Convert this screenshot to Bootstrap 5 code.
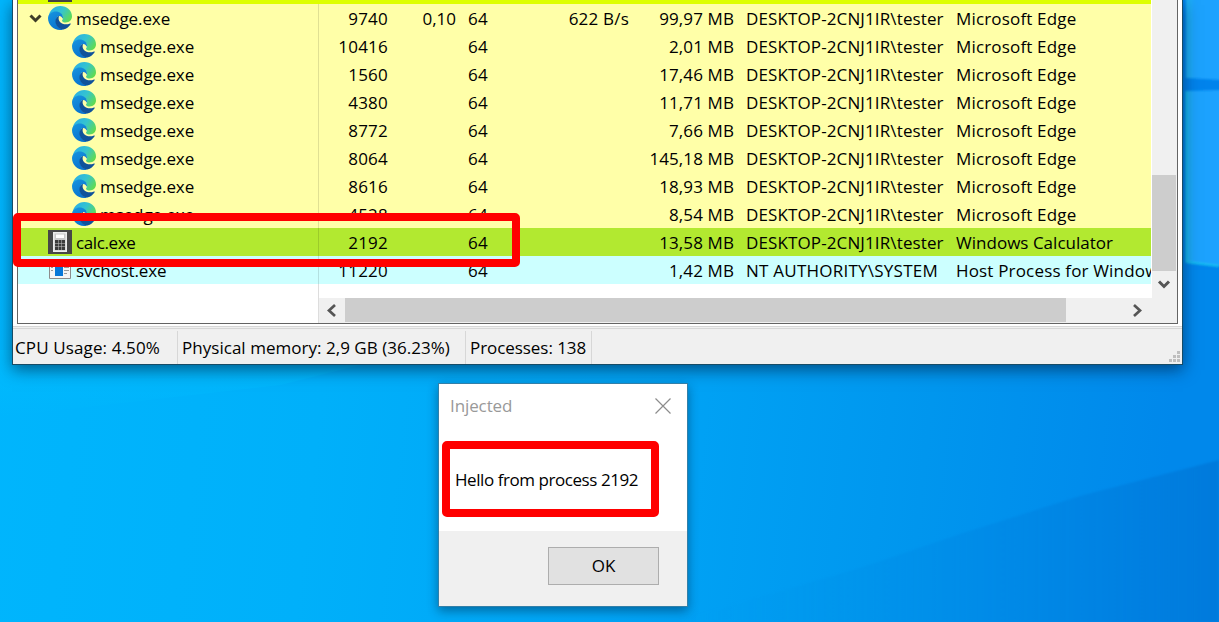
<!DOCTYPE html>
<html lang="en">
<head>
<meta charset="utf-8">
<meta name="viewport" content="width=device-width, initial-scale=1">
<title>Process list</title>
<link href="https://cdn.jsdelivr.net/npm/bootstrap@5.3.0/dist/css/bootstrap.min.css" rel="stylesheet">
<style>
body{width:1219px;height:622px;font:17px/28px "Open Sans","Noto Sans",sans-serif;color:#000;background:#00b4fb}
.wallpaper{left:0;top:0}
.proc-window{left:12px;top:0;width:1171px;height:365px;background:#fff;border:1px solid #174c66;border-top:0;box-shadow:0 5px 15px rgba(0,20,50,.55)}
.tree-pane{margin:0 4px;height:324px;border:1px solid #646464;border-top:0;background:#fff;width:1161px}
.rows-area{width:1133px;height:298px}
.lime-edge{height:4px;background:#df0}
.prow{height:28px;line-height:29px;white-space:nowrap;overflow:hidden}
.prow>div{flex:none;height:28px;white-space:pre}
.edge-row{background:#ffffa8}
.calc-row{background:#b2e930}
.svc-row{background:#cff}
.c-name{width:301px;border-right:1px solid rgba(0,0,0,.12)}
.c-name span{margin-left:4px;letter-spacing:-.09px}
.calc-row .c-name span{letter-spacing:-.4px}
.svc-row .c-name span{letter-spacing:-.15px}
.ps-root{padding-left:30px}
.ps-indent{padding-left:54px}
.c-name svg{flex:none}
.c-pid{width:69px;letter-spacing:.22px}
.c-cpu{width:68px}
.c-bits{width:60px;padding-left:12px;letter-spacing:.2px}
.c-io{width:113px;letter-spacing:.2px}
.c-mem{width:105px;letter-spacing:.1px}
.c-user{width:210px;padding-left:12px}
.u1{letter-spacing:.12px}
.u2{letter-spacing:.24px}
.c-desc{padding-left:12px;letter-spacing:.17px}
.calc-row .c-desc{letter-spacing:.02px}
.fill-row{height:14px}
.fill-row>div{width:301px;border-right:1px solid #ddd}
.vbar{width:26px;height:298px;background:#f0f0f0;border-left:1px solid #fff}
.vthumb{width:24px;height:96px;margin-top:175px;background:#cdcdcd}
.hline{height:25px}
.hblank{width:301px;border-right:1px solid #ddd}
.hbar{background:#f0f0f0;height:25px}
.hthumb{width:721px;height:24px;background:#cdcdcd}
.status-strip{height:38px;margin-top:2px;border-top:1px solid #d7d7d7;background:#f0f0f0}
.status-in{height:35px;margin-top:1px;border-top:1px solid #d7d7d7;white-space:nowrap}
.status-in>div{height:33px;margin-top:2px;line-height:34px;border-right:1px solid #d7d7d7;flex:none}
.s1{width:165px;padding-left:2px;letter-spacing:.12px}
.s2{width:288px;padding-left:4px;letter-spacing:.03px}
.s3{width:126px;padding-left:4px;letter-spacing:-.06px}
.grip{right:2px;bottom:2px}
.dialog{left:438px;top:383px;width:250px;height:224px;border:1px solid #327fa8;background:#fff;box-shadow:0 4px 10px rgba(0,30,60,.45)}
.dlg-title{height:46px;padding:0 16px 2px 11px;color:#999;line-height:48px;letter-spacing:-.1px}
.dlg-body{height:101px;padding:36px 0 0 16px;letter-spacing:-.44px}
.dlg-foot{height:75px;background:#f0f0f0;padding:16px 28px 0 0}
.ok-btn{width:111px;height:38px;border:1px solid #adadad;border-radius:0;background:#e1e1e1;font-size:17px;line-height:36px;padding:0;color:#000}
.mark-box{border:8px solid #f00;border-radius:5px}
.m1{left:13px;top:213px;width:507px;height:54px}
.m2{left:442px;top:441px;width:217px;height:76px}
</style>
</head>
<body class="position-relative overflow-hidden">
<svg class="wallpaper position-absolute" width="1219" height="622">
<defs>
<linearGradient id="sky" x1="0" y1="0" x2="1" y2="0.06"><stop offset="0" stop-color="#00b6fd"/><stop offset=".3" stop-color="#00b0fa"/><stop offset=".55" stop-color="#00a5f6"/><stop offset=".8" stop-color="#0096ee"/><stop offset="1" stop-color="#0088eb"/></linearGradient>
<linearGradient id="beam" x1="0" y1="0" x2="1" y2="0"><stop offset="0" stop-color="#0096e8" stop-opacity="0"/><stop offset=".5" stop-color="#0088e5" stop-opacity=".5"/><stop offset="1" stop-color="#007adc"/></linearGradient>
<linearGradient id="low" x1="0" y1="0" x2="0" y2="1"><stop offset="0" stop-color="#00bfff" stop-opacity=".6"/><stop offset="1" stop-color="#00bfff" stop-opacity="0"/></linearGradient>
<linearGradient id="pane" x1="0" y1="0" x2="1" y2="0"><stop offset="0" stop-color="#1bb4f4"/><stop offset=".25" stop-color="#1ba2fd"/><stop offset="1" stop-color="#20a3ff"/></linearGradient>
<filter id="soft"><feGaussianBlur stdDeviation="1"/></filter>
</defs>
<rect width="1219" height="622" fill="url(#sky)"/>
<path d="M0 350H420L280 385L0 417Z" fill="url(#low)"/>
<path d="M690 617L860 568L960 534L1080 496L1219 460V622H690Z" fill="url(#beam)" filter="url(#soft)"/>
<rect x="1180" width="39" height="270" fill="#0083ec"/>
<g filter="url(#soft)"><path d="M1186-4H1223V80L1186 78Z" fill="url(#pane)"/><path d="M1186 91L1223 90V266L1186 262Z" fill="url(#pane)"/><path d="M1186 262L1219 266M1186.500 91V262" stroke="#19c3f0" stroke-width="2" fill="none"/></g>
</svg>

<svg width="0" height="0" class="position-absolute">
<defs>
<linearGradient id="eg" x1="0" y1=".2" x2="1" y2=".7"><stop offset="0" stop-color="#28aee8"/><stop offset=".5" stop-color="#35c4cf"/><stop offset="1" stop-color="#62dc4c"/></linearGradient>
<linearGradient id="eb" x1="0" y1="0" x2=".5" y2="1"><stop offset="0" stop-color="#1795df"/><stop offset="1" stop-color="#0873cf"/></linearGradient>
<symbol id="edge" viewBox="0 0 24 24">
<path d="M.6 10.500C1.500 4.300 6.200 0 12.200 0C19 0 24 4.800 24 10.300C24 14.200 21.200 16.500 17.800 16.500C15.300 16.500 14 15.500 14 14.700C14 14 15 13.500 15 11.700C15 8.600 11.500 6.200 7.500 6.200C4.500 6.200 1.900 7.700.6 10.500Z" fill="url(#eg)"/>
<path d="M0 12C.3 7.800 4 5.600 7.700 5.600C11.500 5.600 15 8.200 15 11.500L14.500 12.700C14 11 12.600 9.900 11 10.100C8.500 10.800 7.500 14 8.200 17C9 20.600 12 23.200 15.400 23.500C14.300 23.900 13.200 24 12 24C5.300 24 0 18.700 0 12Z" fill="url(#eb)"/>
<path d="M11.200 10C8.500 10.700 7 13.500 7.600 16.800C8.500 21.200 12.300 23.700 15.500 23.500C18.700 22.600 21.200 20.700 22.800 18C23 17.500 22.600 17.200 22 17.500C18.500 19 14.200 18.500 12 16C10.400 14.200 10.200 11.800 11.200 10Z" fill="#10529b"/>
</symbol>
</defs>
</svg>

<main class="proc-window position-absolute">
<div class="tree-pane">
 <div class="d-flex">
  <div class="rows-area overflow-hidden position-relative">
   <div class="lime-edge"><svg class="d-block" width="100" height="4"><path d="M30 0H54V2H30Z" fill="#444"/></svg></div>
   <div id="rows"></div>
   <div class="fill-row"><div class="h-100"></div></div>
  </div>
  <div class="vbar"><div class="vthumb"></div><svg class="d-block" width="24" height="27"><path d="M7 10.500L12 15.500L17 10.500" fill="none" stroke="#555" stroke-width="3"/></svg></div>
 </div>
 <div class="hline d-flex"><div class="hblank flex-shrink-0"></div><div class="hbar d-flex flex-grow-1"><svg width="26" height="24"><path d="M16 7L10 12.500L16 18" fill="none" stroke="#555" stroke-width="2.700"/></svg><div class="hthumb"></div><svg class="ms-auto" width="52" height="24"><path d="M9 7L15 12.500L9 18" fill="none" stroke="#555" stroke-width="2.700"/></svg></div></div>
</div>
<div class="status-strip position-relative"><div class="status-in d-flex"><div class="s1">CPU Usage: 4.50%</div><div class="s2">Physical memory: 2,9 GB (36.23%)</div><div class="s3">Processes: 138</div></div>
<svg class="grip position-absolute" width="11" height="11" fill="#bfbfbf"><path d="M8 0h3v3h-3zM4 4h3v3h-3zM8 4h3v3h-3zM0 8h3v3h-3zM4 8h3v3h-3zM8 8h3v3h-3z"/></svg></div>
</main>

<section class="dialog position-absolute">
<div class="dlg-title d-flex justify-content-between align-items-center"><span>Injected</span><svg width="16" height="16"><path d="M.5.5L15.500 15.500M15.500.5L.5 15.500" stroke="#8c8c8c" stroke-width="1.200"/></svg></div>
<div class="dlg-body">Hello from process 2192</div>
<div class="dlg-foot d-flex justify-content-end"><button class="btn ok-btn">OK</button></div>
</section>

<div class="mark-box m1 position-absolute"></div>
<div class="mark-box m2 position-absolute"></div>

<script>
const user = 'DESKTOP-2CNJ1IR\\tester';
const edge = [['9740','99,97'],['10416','2,01'],['1560','17,46'],['4380','11,71'],['8772','7,66'],['8064','145,18'],['8616','18,93'],['4528','8,54']];
const icons = {
 edge:'<svg width="24" height="24"><use href="#edge"/></svg>',
 calc:'<svg width="24" height="24"><path d="M0 0H24V24H0Z" fill="#474747"/><path d="M5 2H19V22H5Z" fill="#ececec"/><path d="M6.500 3.500H17.500V20.500H6.500Z" fill="#c8c8c8"/><path d="M8 4.500H16V8H8Z" fill="#fff"/><path d="M7 10h3v3h-3zM10.500 10h3v3h-3zM14 10h3v3h-3zM7 13.500h3v3h-3zM10.500 13.500h3v3h-3zM14 13.500h3v3h-3zM7 17h3v3h-3zM10.500 17h3v3h-3zM14 17h3v3h-3z" fill="#3c3c3c"/></svg>',
 svc:'<svg width="24" height="24"><path d="M1.500 3.500H22.500V20.500H1.500Z" fill="#f5f5f5" stroke="#8c8c8c"/><path d="M2 4H22V6H2Z" fill="#aaa"/><path d="M7 8H15V18H7Z" fill="#0878d8"/><path d="M3 9.500h2M3 12.500h2M16 9.500h5M16 12.500h5M16 15.500h3" stroke="#999"/></svg>'
};
function row(cls, icon, name, indent, pid, cpu, io, mem, who, desc, open){
 const chev = open ? '<svg width="30" height="28"><path d="M12.500 11.500L17.500 16.500L22.500 11.500" fill="none" stroke="#3e3d28" stroke-width="3"/></svg>' : '';
 return `<div class="prow d-flex ${cls}"><div class="c-name d-flex align-items-center ${open?'':indent?'ps-indent':'ps-root'}">${chev}${icons[icon]}<span>${name}</span></div><div class="c-pid text-end">${pid}</div><div class="c-cpu text-end">${cpu}</div><div class="c-bits">64</div><div class="c-io text-end">${io}</div><div class="c-mem text-end">${mem} MB</div><div class="c-user ${who===user?'u1':'u2'}">${who}</div><div class="c-desc">${desc}</div></div>`;
}
document.getElementById('rows').innerHTML =
 edge.map((e,i)=>row('edge-row','edge','msedge.exe',i>0,e[0],i?'':'0,10',i?'':'622 B/s',e[1],user,'Microsoft Edge',i===0)).join('')
 + row('calc-row','calc','calc.exe',false,'2192','','','13,58',user,'Windows Calculator',false)
 + row('svc-row','svc','svchost.exe',false,'11220','','','1,42','NT AUTHORITY\\SYSTEM','Host Process for Windows',false);
</script>
<script src="https://cdn.jsdelivr.net/npm/bootstrap@5.3.0/dist/js/bootstrap.bundle.min.js"></script>
</body>
</html>
